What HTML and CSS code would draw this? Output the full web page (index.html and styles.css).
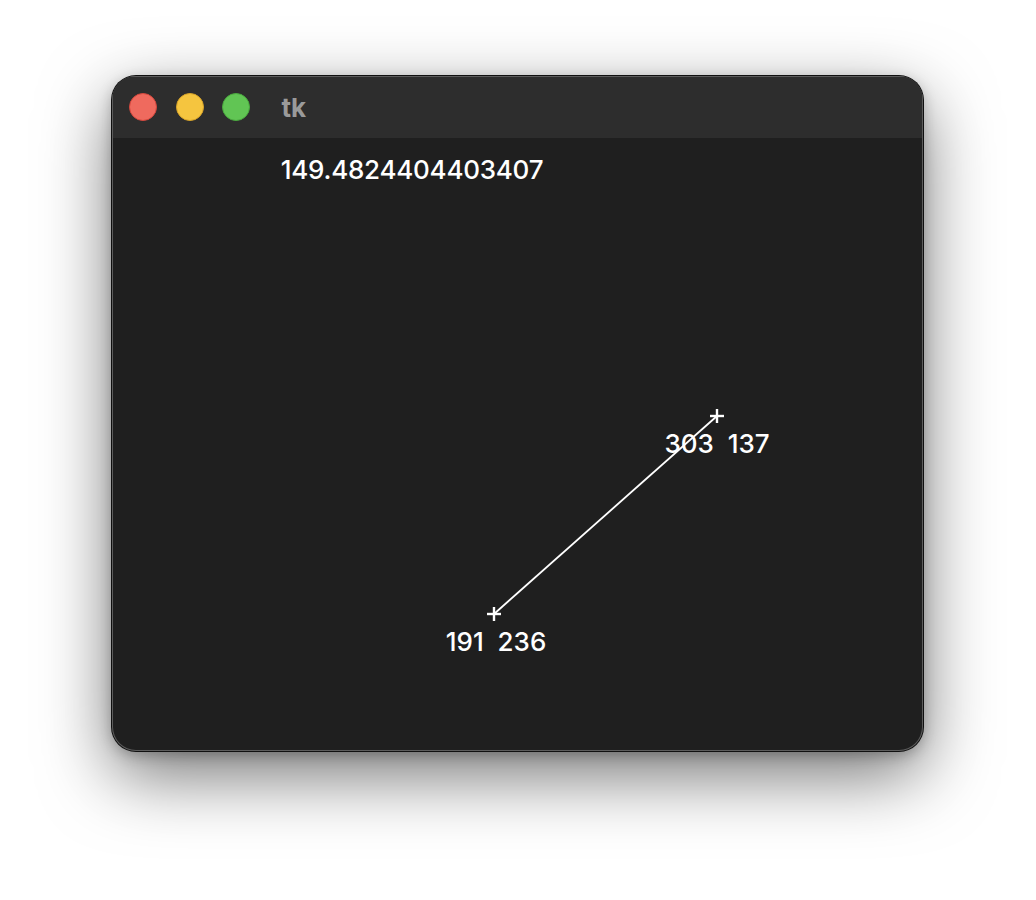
FILE: index.html
```html
<!DOCTYPE html>
<html>
<head>
<meta charset="utf-8">
<link rel="stylesheet" href="styles.css">
</head>
<body>
<div class="window">
  <div class="titlebar">
    <span class="light red"></span>
    <span class="light yellow"></span>
    <span class="light green"></span>
    <span class="title">tk</span>
  </div>
  <div class="canvas">
    <svg class="drawing" width="811" height="613" viewBox="0 0 811 613">
      <line x1="382" y1="476" x2="605" y2="278" stroke="#fff" stroke-width="1.8"/>
      <line x1="375" y1="476" x2="389" y2="476" stroke="#fff" stroke-width="2.4"/>
      <line x1="382" y1="469" x2="382" y2="483" stroke="#fff" stroke-width="2.4"/>
      <line x1="598" y1="278" x2="612" y2="278" stroke="#fff" stroke-width="2.4"/>
      <line x1="605" y1="271" x2="605" y2="285" stroke="#fff" stroke-width="2.4"/>
    </svg>
    <div class="label dist">149.4824404403407</div>
    <div class="label p1">303  137</div>
    <div class="label p2">191  236</div>
  </div>
</div>
</body>
</html>
```
FILE: styles.css
```css
html, body {
  margin: 0;
  padding: 0;
  background: #ffffff;
}
body {
  width: 1036px;
  height: 900px;
  overflow: hidden;
  padding-top: 76px;
  box-sizing: border-box;
}
.window {
  margin-left: 112px;
  width: 811px;
  height: 675px;
  border-radius: 24px;
  overflow: hidden;
  background: #1f1f1f;
  box-shadow: 0 0 0 1px #101010, inset 0 0 0 1px #5c5c5c, 0 24px 70px rgba(0,0,0,0.55), 0 4px 14px rgba(0,0,0,0.25);
  display: flex;
  flex-direction: column;
  position: relative;
}
.titlebar {
  height: 62px;
  flex: none;
  background: #2d2d2d;
  display: flex;
  align-items: center;
  padding-left: 17px;
  gap: 18.5px;
  box-shadow: inset 1px 1px 0 #5c5c5c, inset -1px 0 0 #5c5c5c;
}
.light {
  width: 28px;
  height: 28px;
  border-radius: 50%;
  box-sizing: border-box;
}
.red { background: #ef6a5e; border: 1px solid #d4473d; }
.yellow { background: #f5c53f; border: 1px solid #d8a429; }
.green { background: #61c554; border: 1px solid #4aa83e; }
.title {
  margin-left: 13px;
  font-family: Inter, "Liberation Sans", sans-serif;
  font-weight: 700;
  font-size: 26px;
  color: #9a9a9a;
  line-height: 1;
  margin-top: 2px;
}
.canvas {
  flex: 1;
  position: relative;
}
.drawing {
  position: absolute;
  left: 0;
  top: 0;
}
.label {
  position: absolute;
  transform: translateX(-50%);
  font-family: Inter, "Liberation Sans", sans-serif;
  font-weight: 500;
  font-size: 26px;
  line-height: 26px;
  color: #ffffff;
  white-space: pre;
}
.dist { left: 300px; top: 19px; letter-spacing: -0.25px; }
.p1 { left: 605px; top: 293px; }
.p2 { left: 384px; top: 491px; }
```
